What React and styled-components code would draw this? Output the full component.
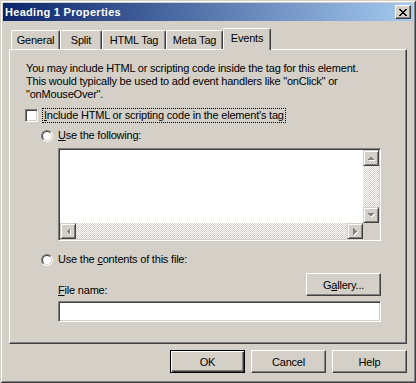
import React from 'react'
import styled, { createGlobalStyle } from 'styled-components'

const Global = createGlobalStyle`
    html, body {
        margin: 0;
        padding: 0;
        background: #d4d0c8;
    }
    * {
        box-sizing: border-box;
    }
`

const FONT = `"Liberation Sans", Arial, sans-serif`

const tabs = [
    { label: 'General', width: 49 },
    { label: 'Split', width: 42 },
    { label: 'HTML Tag', width: 64 },
    { label: 'Meta Tag', width: 57 },
    { label: 'Events', width: 48, active: true },
]

const closeGlyph = [
    'XX....XX',
    '.XX..XX.',
    '..XXXX..',
    '...XX...',
    '..XXXX..',
    '.XX..XX.',
    'XX....XX',
]

const CloseIcon = () => (
    <svg width="8" height="7" viewBox="0 0 8 7" shapeRendering="crispEdges">
        {closeGlyph.map((row, y) =>
            row.split('').map((c, x) => (c === 'X' ? <rect key={`${x}-${y}`} x={x} y={y} width="1" height="1" fill="#000" /> : null))
        )}
    </svg>
)

const Arrow = ({ dir }) => {
    const shapes = {
        up: '4,5 7.5,1.5 11,5',
        down: '4,1 11,1 7.5,4.5',
        left: '5,4 1.5,7.5 5,11',
        right: '1,4 4.5,7.5 1,11',
    }
    const size = dir === 'up' || dir === 'down' ? [15, 6] : [6, 15]
    return (
        <svg width={size[0]} height={size[1]} viewBox={`0 0 ${size[0]} ${size[1]}`} shapeRendering="crispEdges">
            <polygon points={shapes[dir]} fill="#fff" transform="translate(1 1)" />
            <polygon points={shapes[dir]} fill="#808080" />
        </svg>
    )
}

const App = () => {
    return (
        <>
            <Global />
            <S.Window>
                <S.TitleBar>
                    <S.Title>Heading 1 Properties</S.Title>
                    <S.CloseButton>
                        <CloseIcon />
                    </S.CloseButton>
                </S.TitleBar>
                <S.Body>
                    <S.TabRow>
                        {tabs.map(tab => (
                            <S.Tab key={tab.label} $width={tab.width} $active={tab.active}>
                                {tab.label}
                            </S.Tab>
                        ))}
                    </S.TabRow>
                    <S.Panel>
                        <S.Description>
                            You may include HTML or scripting code inside the tag for this element.
                            <br />
                            This would typically be used to add event handlers like "onClick" or
                            <br />
                            "onMouseOver".
                        </S.Description>
                        <S.CheckRow>
                            <S.CheckBox />
                            <S.FocusLabel>
                                <u>I</u>nclude HTML or scripting code in the element's tag
                            </S.FocusLabel>
                        </S.CheckRow>
                        <S.RadioRow $top={6}>
                            <S.Radio>
                                <S.RadioInner />
                            </S.Radio>
                            <span>
                                <u>U</u>se the following:
                            </span>
                        </S.RadioRow>
                        <S.TextArea>
                            <S.TextCell />
                            <S.VScroll>
                                <S.ScrollButton>
                                    <Arrow dir="up" />
                                </S.ScrollButton>
                                <S.Track />
                                <S.ScrollButton>
                                    <Arrow dir="down" />
                                </S.ScrollButton>
                            </S.VScroll>
                            <S.HScroll>
                                <S.ScrollButton>
                                    <Arrow dir="left" />
                                </S.ScrollButton>
                                <S.Track />
                                <S.ScrollButton>
                                    <Arrow dir="right" />
                                </S.ScrollButton>
                            </S.HScroll>
                            <S.Corner />
                        </S.TextArea>
                        <S.RadioRow $top={12}>
                            <S.Radio>
                                <S.RadioInner />
                            </S.Radio>
                            <span>
                                Use the <u>c</u>ontents of this file:
                            </span>
                        </S.RadioRow>
                        <S.FileRow>
                            <S.FieldLabel>
                                <u>F</u>ile name:
                            </S.FieldLabel>
                            <S.Button>
                                G<u>a</u>llery...
                            </S.Button>
                        </S.FileRow>
                        <S.Input />
                    </S.Panel>
                    <S.ButtonRow>
                        <S.Button $default>OK</S.Button>
                        <S.Button>Cancel</S.Button>
                        <S.Button>Help</S.Button>
                    </S.ButtonRow>
                </S.Body>
            </S.Window>
        </>
    )
}

const raised = `
    border: 1px solid;
    border-color: #fff #404040 #404040 #fff;
    box-shadow: inset -1px -1px #808080;
`

const sunken = `
    border: 1px solid;
    border-color: #808080 #fff #fff #808080;
    box-shadow: inset 1px 1px #404040, inset -1px -1px #d4d0c8;
`

const S = {
    Window: styled.div`
        width: 416px;
        height: 383px;
        padding: 3px;
        display: flex;
        flex-direction: column;
        background: #d4d0c8;
        box-shadow: inset 1px 1px #d4d0c8, inset -1px -1px #404040, inset 2px 2px #fff, inset -2px -2px #808080;
        font-family: ${FONT};
        font-size: 11px;
        letter-spacing: -0.2px;
        color: #000;
    `,
    TitleBar: styled.div`
        height: 18px;
        display: flex;
        align-items: center;
        padding: 0 2px;
        background: linear-gradient(90deg, #0a246a, #a6caf0);
        color: #fff;
        font-weight: bold;
        letter-spacing: 0.3px;
    `,
    Title: styled.span`
        flex: 1;
    `,
    CloseButton: styled.div`
        width: 16px;
        height: 14px;
        display: flex;
        align-items: center;
        justify-content: center;
        padding-right: 1px;
        background: #d4d0c8;
        ${raised}
    `,
    Body: styled.div`
        display: flex;
        flex-direction: column;
        padding: 7px 6px 0;
    `,
    TabRow: styled.div`
        height: 22px;
        margin-bottom: -1px;
        padding-left: 2px;
        display: flex;
        align-items: flex-end;
        position: relative;
        z-index: 1;
    `,
    Tab: styled.div`
        width: ${({ $width }) => $width}px;
        height: ${({ $active }) => ($active ? 22 : 19)}px;
        margin-bottom: ${({ $active }) => ($active ? 0 : 1)}px;
        padding-bottom: ${({ $active }) => ($active ? 4 : 1)}px;
        display: flex;
        align-items: center;
        justify-content: center;
        background: #d4d0c8;
        border-top: 1px solid #fff;
        border-left: 1px solid #fff;
        border-right: 1px solid #404040;
        border-radius: 2px 2px 0 0;
        box-shadow: inset -1px 0 #808080;
    `,
    Panel: styled.div`
        width: 398px;
        height: 295px;
        padding: 12px 0 0 16px;
        display: flex;
        flex-direction: column;
        border: 1px solid;
        border-color: #fff #404040 #404040 #fff;
        box-shadow: inset -1px -1px #808080;
    `,
    Description: styled.div`
        line-height: 13px;
    `,
    CheckRow: styled.div`
        margin: 7px 0 0 -1px;
        display: flex;
        align-items: center;
        gap: 4px;
        line-height: 13px;
    `,
    CheckBox: styled.span`
        width: 13px;
        height: 13px;
        background: #fff;
        ${sunken}
    `,
    FocusLabel: styled.span`
        padding: 0 1px;
        border: 1px dotted #000;
    `,
    RadioRow: styled.div`
        margin: ${({ $top }) => $top}px 0 0 15px;
        display: flex;
        align-items: center;
        gap: 5px;
        line-height: 13px;
    `,
    Radio: styled.span`
        width: 12px;
        height: 12px;
        border-radius: 50%;
        border: 1px solid;
        border-color: #808080 #fff #fff #808080;
        display: flex;
    `,
    RadioInner: styled.span`
        flex: 1;
        border-radius: 50%;
        border: 1px solid;
        border-color: #404040 #d4d0c8 #d4d0c8 #404040;
        background: #fff;
    `,
    TextArea: styled.div`
        width: 323px;
        height: 93px;
        margin: 6px 0 0 32px;
        display: grid;
        grid-template-columns: 1fr 16px;
        grid-template-rows: 1fr 16px;
        padding: 1px;
        ${sunken}
    `,
    TextCell: styled.div`
        background: #fff;
    `,
    VScroll: styled.div`
        display: flex;
        flex-direction: column;
    `,
    HScroll: styled.div`
        display: flex;
    `,
    Track: styled.div`
        flex: 1;
        background: repeating-conic-gradient(#fff 0 25%, #d4d0c8 0 50%) 0 0 / 2px 2px;
    `,
    ScrollButton: styled.div`
        width: 16px;
        height: 16px;
        flex-shrink: 0;
        display: flex;
        align-items: center;
        justify-content: center;
        background: #d4d0c8;
        border: 1px solid;
        border-color: #d4d0c8 #404040 #404040 #d4d0c8;
        box-shadow: inset 1px 1px #fff, inset -1px -1px #808080;
    `,
    Corner: styled.div`
        background: #d4d0c8;
    `,
    FileRow: styled.div`
        width: 323px;
        margin: 7px 0 0 32px;
        display: flex;
        justify-content: space-between;
        align-items: flex-end;
    `,
    FieldLabel: styled.span`
        line-height: 13px;
        margin-bottom: -1px;
    `,
    Input: styled.div`
        width: 323px;
        height: 21px;
        margin: 5px 0 0 32px;
        background: #fff;
        ${sunken}
    `,
    ButtonRow: styled.div`
        margin-top: 6px;
        display: flex;
        justify-content: flex-end;
        gap: 6px;
    `,
    Button: styled.div`
        width: 75px;
        height: 23px;
        display: flex;
        align-items: center;
        justify-content: center;
        background: #d4d0c8;
        ${({ $default }) =>
            $default
                ? `
            border: 1px solid #000;
            box-shadow: inset 1px 1px #fff, inset -1px -1px #404040, inset -2px -2px #808080;
        `
                : raised}
    `,
}

export default App
